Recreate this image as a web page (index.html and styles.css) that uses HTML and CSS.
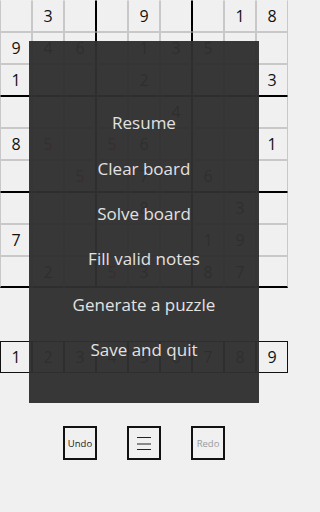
FILE: index.html
```html
<!DOCTYPE html>
<html>
<head>
<meta charset="utf-8">
<link rel="stylesheet" href="styles.css">
</head>
<body>
<div class="app">
  <div class="board">
    <div class="row"><div class="c"></div><div class="c">3</div><div class="c"></div><div class="c"></div><div class="c">9</div><div class="c"></div><div class="c"></div><div class="c">1</div><div class="c">8</div></div>
    <div class="row"><div class="c">9</div><div class="c">4</div><div class="c">6</div><div class="c"></div><div class="c">1</div><div class="c">3</div><div class="c">5</div><div class="c"></div><div class="c"></div></div>
    <div class="row"><div class="c">1</div><div class="c"></div><div class="c"></div><div class="c"></div><div class="c">2</div><div class="c"></div><div class="c"></div><div class="c"></div><div class="c">3</div></div>
    <div class="row"><div class="c"></div><div class="c"></div><div class="c"></div><div class="c"></div><div class="c"></div><div class="c">4</div><div class="c"></div><div class="c"></div><div class="c"></div></div>
    <div class="row"><div class="c">8</div><div class="c err">5</div><div class="c"></div><div class="c err">5</div><div class="c">6</div><div class="c"></div><div class="c"></div><div class="c"></div><div class="c">1</div></div>
    <div class="row"><div class="c"></div><div class="c"></div><div class="c err">5</div><div class="c"></div><div class="c">7</div><div class="c"></div><div class="c">6</div><div class="c"></div><div class="c"></div></div>
    <div class="row"><div class="c"></div><div class="c"></div><div class="c"></div><div class="c"></div><div class="c">8</div><div class="c"></div><div class="c"></div><div class="c">3</div><div class="c"></div></div>
    <div class="row"><div class="c">7</div><div class="c"></div><div class="c"></div><div class="c"></div><div class="c"></div><div class="c"></div><div class="c">1</div><div class="c">9</div><div class="c"></div></div>
    <div class="row"><div class="c"></div><div class="c">2</div><div class="c"></div><div class="c err">5</div><div class="c">3</div><div class="c"></div><div class="c">8</div><div class="c">7</div><div class="c"></div></div>
  </div>

  <div class="picker">
    <div class="pk">1</div><div class="pk">2</div><div class="pk">3</div><div class="pk">4</div><div class="pk">5</div><div class="pk">6</div><div class="pk">7</div><div class="pk">8</div><div class="pk">9</div>
  </div>

  <div class="tools">
    <div class="btn">Undo</div>
    <div class="btn menu-btn">
      <svg width="16" height="16" viewBox="0 0 16 16"><path d="M1 2.5h14M1 9h14M1 14.5h14" stroke="#222" stroke-width="1.2" fill="none"/></svg>
    </div>
    <div class="btn dim">Redo</div>
  </div>

  <div class="dialog">
    <div class="item">Resume</div>
    <div class="item">Clear board</div>
    <div class="item">Solve board</div>
    <div class="item">Fill valid notes</div>
    <div class="item">Generate a puzzle</div>
    <div class="item">Save and quit</div>
  </div>
</div>
</body>
</html>
```
FILE: styles.css
```css
html, body {
  margin: 0;
  padding: 0;
  background: #f0f0f0;
  font-family: "Open Sans", "Noto Sans", sans-serif;
}
.app {
  position: relative;
  width: 288px;
  height: 512px;
  overflow: hidden;
}
.board {
  display: flex;
  flex-direction: column;
  width: 288px;
}
.row {
  display: flex;
}
.c {
  box-sizing: border-box;
  width: 32px;
  height: 32px;
  border: 1px solid #c8c8c8;
  display: flex;
  align-items: center;
  justify-content: center;
  font-size: 16px;
  color: #111;
  line-height: 1;
}
.c:nth-child(3n):not(:last-child) { border-right-color: #000; }
.c:nth-child(3n+1):not(:first-child) { border-left-color: #000; }
.row:nth-child(3n) .c { border-bottom-color: #000; }
.row:nth-child(3n+1):not(:first-child) .c { border-top-color: #000; }
.row:first-child .c { border-top-color: transparent; }
.row:last-child .c { border-bottom-width: 2px; }
.c.err { color: #d01010; }

.picker {
  display: flex;
  margin-top: 53px;
}
.pk {
  box-sizing: border-box;
  width: 32px;
  height: 32px;
  border: 1px solid #111;
  display: flex;
  align-items: center;
  justify-content: center;
  font-size: 16px;
  color: #111;
  line-height: 1;
}
.tools {
  display: flex;
  justify-content: center;
  gap: 30px;
  margin-top: 53px;
}
.btn {
  box-sizing: border-box;
  width: 34px;
  height: 34px;
  border: 2px solid #111;
  display: flex;
  align-items: center;
  justify-content: center;
  font-size: 9.5px;
  color: #222;
}
.btn.dim { color: #9a9a9a; }

.dialog {
  position: absolute;
  left: 29px;
  top: 41px;
  width: 230px;
  height: 362px;
  box-sizing: border-box;
  padding-top: 59px;
  background: rgba(48, 48, 48, 0.965);
  display: flex;
  flex-direction: column;
}
.item {
  height: 45.4px;
  display: flex;
  align-items: center;
  justify-content: center;
  color: #e2e2e2;
  font-size: 17px;
}
```
